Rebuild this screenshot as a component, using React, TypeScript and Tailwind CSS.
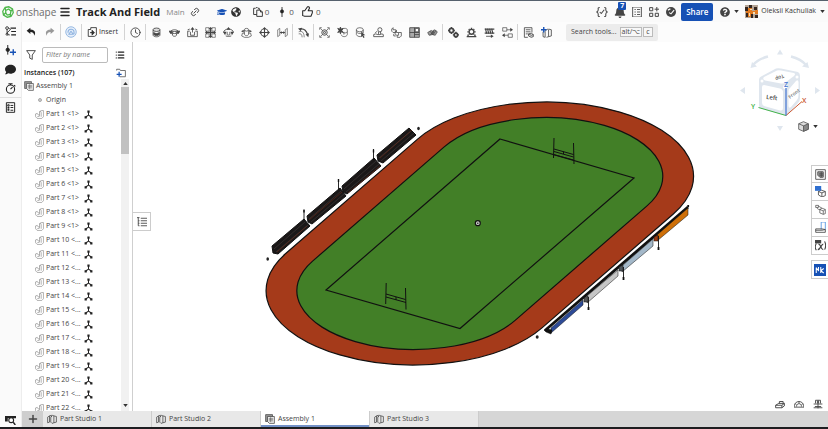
import type { ReactNode } from 'react';
import { Menu, Link2, List, Clock, Plus } from 'lucide-react';
import { FaGraduationCap, FaGlobeAmericas, FaBell, FaComment, FaQuestionCircle } from 'react-icons/fa';
import { clsx } from 'clsx';

type IconProps = { children: ReactNode; className?: string };

function Icon({ children, className = 'size-3' }: IconProps) {
  return (
    <svg
      viewBox="0 0 16 16"
      fill="none"
      stroke="currentColor"
      strokeWidth="1.2"
      strokeLinejoin="round"
      className={clsx('shrink-0', className)}
      aria-hidden="true"
    >
      {children}
    </svg>
  );
}

const partStudioIcon = (
  <>
    <path d="M1 5l3-2v10l-3 1zM4 3l3-1v3M6 5l3-3 2 1v11l-3 1-2-2z" />
    <path d="M11 3l4 1v9l-4 1" />
  </>
);

const assemblyIcon = (
  <>
    <path d="M1 1h11v11H1z" fill="#999" />
    <path d="M4 4h11v11H7l-3-3z" fill="#eee" />
    <path d="M6 7h7M6 9h7M6 11h7M9 5v8" strokeWidth="0.8" />
  </>
);

const partIcon = <path d="M1 7l3-1 2 3 2-1V3l3-2h4v11l-3 3H4l-3-3zM8 8v3l-4 1M11 4v8M8 3h3" strokeWidth="1" />;

const mateIcon = (
  <>
    <path d="M8 3v6L3 12.5M8 9l5 3.5" strokeWidth="1.8" />
    <path d="M6 1h4v4H6zM1 11h4v4H1zM11 11h4v4h-4z" fill="currentColor" stroke="none" />
  </>
);

const undoArrow = <path d="M7 1L1 6l6 5V8c4 0 6 2 6 6 4-6 0-10-6-10z" fill="currentColor" stroke="none" />;

const toolGroups: { label: string; icon: ReactNode }[][] = [
  [
    {
      label: 'Fastened mate',
      icon: (
        <>
          <ellipse cx="8" cy="4" rx="5" ry="2.5" fill="#ddd" />
          <path d="M3 4v8c1 3 9 3 10 0V4" />
          <path d="M4 8c2 2 6 2 8 0v3c-2 2-6 2-8 0z" fill="currentColor" />
        </>
      ),
    },
    {
      label: 'Revolute mate',
      icon: (
        <>
          <path d="M2 7c2-4 10-4 12 0M5 8v4c1 2 5 2 6 0V8" />
          <path d="M0 6h5l-2 4zM16 6h-5l2 4z" fill="currentColor" />
          <ellipse cx="8" cy="8" rx="3" ry="1.5" />
        </>
      ),
    },
    {
      label: 'Slider mate',
      icon: (
        <>
          <path d="M4 6H1v8h14V6h-3M5 7v5h6V7M8 2v6" />
          <path d="M5 4l3-4 3 4z" fill="currentColor" stroke="none" />
          <path d="M1 4l3-1M15 4l-3-1" />
        </>
      ),
    },
    {
      label: 'Planar mate',
      icon: (
        <>
          <path d="M1 1h5v5H1zM10 1h5v5h-5zM1 10h5v5H1zM10 10h5v5h-5z" strokeWidth="0.9" />
          <path d="M8 2v12M2 8h12" strokeWidth="2" />
          <path d="M5 3l3-3 3 3zM5 13l3 3 3-3zM3 5L0 8l3 3zM13 5l3 3-3 3z" fill="currentColor" stroke="none" />
        </>
      ),
    },
    {
      label: 'Cylindrical mate',
      icon: (
        <>
          <path d="M1 8c0-3 3-5 7-5s7 2 7 5M4 13c3 1 5 1 8 0M6 7v4c1 1 3 1 4 0V7" />
          <path d="M0 7h5l-2 5zM16 7h-5l2 5zM5 4l3-4 3 4z" fill="currentColor" stroke="none" />
        </>
      ),
    },
    {
      label: 'Pin slot mate',
      icon: (
        <>
          <path d="M5 9H2l-1 4 4 2h6l4-2-1-4h-3M5 4v7c1 2 5 2 6 0V4" strokeWidth="1" />
          <ellipse cx="8" cy="4" rx="3" ry="2" strokeWidth="1" />
          <path d="M0 6l4-2v4zM16 6l-4-2v4z" fill="currentColor" stroke="none" />
        </>
      ),
    },
    {
      label: 'Ball mate',
      icon: (
        <>
          <circle cx="8" cy="8" r="5.5" />
          <path d="M8 2v12M2 8h12" strokeWidth="1.6" />
          <path d="M5.5 3L8 0l2.5 3zM5.5 13L8 16l2.5-3zM3 5.5L0 8l3 2.5zM13 5.5L16 8l-3 2.5z" fill="currentColor" stroke="none" />
        </>
      ),
    },
    {
      label: 'Parallel mate',
      icon: (
        <>
          <path d="M1 4l3-2v10l-3 2zM12 4l3-2v10l-3 2z" strokeWidth="0.9" />
          <path d="M5 8h6" strokeWidth="1.4" />
          <path d="M4 8l3-2v4zM12 8L9 6v4z" fill="currentColor" stroke="none" />
        </>
      ),
    },
  ],
  [
    {
      label: 'Tangent mate',
      icon: (
        <>
          <path d="M1 7c5-2 8 1 8 8M1 10c3-1 5 1 5 5" strokeWidth="0.9" />
          <path d="M3 3c5-1 9 2 11 8" strokeWidth="1.8" />
          <path d="M0 2l6-1-2 5zM15 15l-4-4 5-2z" fill="currentColor" stroke="none" />
        </>
      ),
    },
  ],
  [
    {
      label: 'Group',
      icon: (
        <>
          <path d="M1 4V1h3M12 1h3v3M15 12v3h-3M4 15H1v-3M2 2l12 12M14 2L2 14" strokeWidth="1" />
          <circle cx="8" cy="8" r="4" fill="#ddd" />
          <circle cx="8" cy="8" r="1.5" />
        </>
      ),
    },
    {
      label: 'Mate connector',
      icon: (
        <>
          <path d="M8 3c2-2 7-1 7 1v7c-1 4-8 4-9 0M9 8c2 1 4 1 6-1M10 7v4" strokeWidth="1" />
          <path d="M5 0l1 3 3-1-2 3 2 3-3-1-1 3-1-3-3 1 2-3-2-3 3 1z" fill="currentColor" />
        </>
      ),
    },
    {
      label: 'Snap mode',
      icon: (
        <>
          <ellipse cx="7" cy="4" rx="5" ry="3" strokeWidth="1" />
          <path d="M2 4v7c1 3 6 4 9 2M12 4v5M3 8c2 2 6 2 8 0" strokeWidth="1" />
          <path d="M9 7l6 5h-3l2 3-2 1-1-3-2 1z" fill="currentColor" stroke="none" />
        </>
      ),
    },
    {
      label: 'Replicate',
      icon: (
        <>
          <path d="M1 11l3-1 3 1h3l3-1 2 1v3H1zM8 10V7M11 10V7" />
          <circle cx="10" cy="4" r="3" />
          <path d="M3 9l3-3" />
        </>
      ),
    },
    {
      label: 'Linear pattern',
      icon: (
        <path d="M1 3l2-2v3h4v4H3L1 6zM6 7l2-2v3h3v4H8l-2-2zM11 8h4v5l-2 2H9v-3M4 10v3h3" strokeWidth="1.1" />
      ),
    },
    {
      label: 'Exploded view',
      icon: (
        <>
          <rect x="1" y="1" width="14" height="14" fill="#aaa" />
          <path d="M1 8h14M8 1v14M8 11h7" />
          <rect x="9" y="2" width="5" height="5" fill="#fff" />
        </>
      ),
    },
    {
      label: 'Named positions',
      icon: (
        <>
          <path d="M1 8l5-3 4 2-2 4-5 1zM7 9l4-5 4 3-3 5-4-1z" fill="#999" strokeWidth="1" />
          <path d="M4 6l6 6M10 4l-5 8M13 5l-4 6" strokeWidth="1" />
        </>
      ),
    },
  ],
  [
    {
      label: 'Gear relation',
      icon: (
        <>
          <circle cx="5" cy="5" r="3" strokeWidth="2.5" />
          <circle cx="11.5" cy="11.5" r="2.500" strokeWidth="2.5" />
          <path d="M5 0v2M5 8v2M0 5h2M8 5h2M11.5 7v2M11.5 14v2M7 11.5h2M14 11.5h2" strokeWidth="2" />
        </>
      ),
    },
    {
      label: 'Rack and pinion relation',
      icon: (
        <>
          <circle cx="8" cy="7" r="3.5" strokeWidth="2" />
          <path d="M8 1v2M2 7h2M12 7h2M4 3l1 1M12 3l-1 1M4 11l1-1M12 11l-1-1" strokeWidth="2" />
          <path d="M1 14h14M2 12h2M12 12h2" strokeWidth="2" />
        </>
      ),
    },
    {
      label: 'Screw relation',
      icon: (
        <>
          <path d="M2 2l2 8M5 2l2 8M8 2l2 8M11 2l2 8M1 3h14M1 9h14" strokeWidth="1.7" />
          <path d="M3 13.5h8" />
          <path d="M10 11l4 2.5-4 2.5z" fill="currentColor" stroke="none" />
        </>
      ),
    },
    {
      label: 'Linear relation',
      icon: (
        <>
          <path d="M1 1h6v5H1zM9 10h6v5H9zM7 4h6M9 12H3" strokeWidth="1" />
          <path d="M12 1l4 3-4 3zM4 9l-4 3 4 3z" fill="currentColor" stroke="none" />
        </>
      ),
    },
  ],
  [
    {
      label: 'Bill of materials',
      icon: (
        <>
          <path d="M7 15H2V1h11v7M4 4h7M4 7h7M4 10h3" />
          <path d="M8 10l4-1 3 2v3l-3 1-4-2zM8 10l4 2 3-1" fill="#ddd" />
        </>
      ),
    },
    {
      label: 'Create part in context',
      icon: (
        <>
          <path d="M3 7v7l3 1V6l3-3 2 1v10l-3 1M11 3l4 1v9l-4 1" />
          <path d="M4 0v8M0 4h8" stroke="#1651b5" strokeWidth="2" />
        </>
      ),
    },
  ],
];

const railTools = [
  {
    label: 'Feature list',
    icon: (
      <>
        <path d="M8 3h8M9 8h7M9 13h7" strokeWidth="1.8" />
        <circle cx="3" cy="3" r="2" />
        <path d="M3 5v5c0 2 1 3 4 3M5 3l3 2-5 5" />
        <circle cx="3" cy="12" r="1.5" />
      </>
    ),
  },
  {
    label: 'Create version',
    icon: (
      <>
        <path d="M4 0v14" strokeWidth="1.4" />
        <circle cx="4" cy="7" r="2.5" fill="currentColor" />
        <path d="M12 6v9M7 10.5h9" stroke="#1651b5" strokeWidth="2" />
      </>
    ),
  },
];

const tabs = [
  { label: 'Part Studio 1', active: false },
  { label: 'Part Studio 2', active: false },
  { label: 'Assembly 1', active: true },
  { label: 'Part Studio 3', active: false },
];

const sidePanels = [
  {
    label: 'Assembly configuration',
    icon: (
      <>
        <rect x="1" y="1" width="14" height="14" />
        <path d="M4 4h8v8H7L4 9z" fill="#999" />
        <path d="M6 7h6M6 9h6M9 4v8" />
      </>
    ),
  },
  {
    label: 'Appearance',
    icon: (
      <>
        <path d="M9 6l6 2v6l-5 2-5-3V8zM5 8l5 2 5-2M10 10v6" />
        <rect x="0" y="0" width="9" height="7" fill="#2f6fd0" stroke="none" />
      </>
    ),
  },
  {
    label: 'Configured features',
    icon: (
      <path d="M1 2h4v3H1zM3 5c0 3 3 3 5 3M7 8l3-2 5 2v6l-3 1-5-2zM7 8l5 2v5M12 10l3-2M5 3l5 3" strokeWidth="1" />
    ),
  },
  {
    label: 'Display states',
    icon: (
      <>
        <path d="M9 11V0h6v11" stroke="#4a90e2" />
        <path d="M1 10h9l5 1v4H1zM1 12h9l5-1" />
      </>
    ),
  },
  {
    label: 'Variables',
    icon: (
      <>
        <path d="M2 5c-2 3-2 7 0 10M14 2c2 4 2 8 0 12" strokeWidth="1.6" />
        <path d="M5 6c4 0 3 8 7 8M12 6c-3 0-4 8-8 8" strokeWidth="1.8" />
        <path d="M0 0h9v5H0z" fill="currentColor" stroke="none" />
      </>
    ),
  },
];

function ShortSeparator() {
  return <div className="mx-px h-4 w-px shrink-0 bg-[#d3d3d3]" />;
}

function Caret() {
  return (
    <svg viewBox="0 0 6 4" className="h-[3px] w-[5px] shrink-0" aria-hidden="true">
      <path d="M0 0h6L3 4z" fill="#333" />
    </svg>
  );
}

function Header() {
  return (
    <header className="flex h-[22px] shrink-0 items-center border-t border-[#56616d] bg-[#fafafa] pr-[3px] pl-[2px]">
      <svg viewBox="0 0 16 16" className="size-3 shrink-0" fill="none" stroke="#4bb648" strokeWidth="1.7" aria-hidden="true">
        <path d="M4 2l5-1 5 3 1 5-3 5-5 1-5-3-1-5zM5 6l4-2 3 3-1 4-4 1-2-3zM4 2l1 4M14 4l-2 3M12 14l-1-3M2 12l3-3" />
      </svg>
      <span className="ml-0.5 w-[39px] text-[10px] leading-4 text-[#6b6b6b]">onshape</span>
      <button aria-label="Main menu" className="ml-1">
        <Menu className="size-3" color="#222" strokeWidth={3} />
      </button>
      <h1 className="ml-[5px] text-[11px] leading-4 font-bold whitespace-nowrap text-[#222]">Track And Field</h1>
      <span className="ml-[6px] text-[8px] text-[#888]">Main</span>
      <button aria-label="Copy link" className="ml-[5px]">
        <Link2 className="size-2.5 -rotate-45 text-[#333]" strokeWidth={2} />
      </button>

      <div className="ml-[17px] flex items-center text-[8px] text-[#555]">
        <FaGraduationCap className="size-2.5 text-[#1651b5]" />
        <FaGlobeAmericas className="ml-1 size-2.5 text-[#333]" />
        <button className="ml-3 flex items-center gap-0.5" aria-label="Copies: 0">
          <Icon className="size-2.5 text-[#333]">
            <path d="M6 12H1V2h3l1-1h2l1 1h2v3M6 5h6l3 3v7H6zM12 5v3h3" strokeWidth="1.5" />
          </Icon>
          0
        </button>
        <button className="ml-2 flex items-center gap-0.5" aria-label="Versions: 0">
          <Icon className="size-2.5 text-[#222]">
            <path d="M8 0v16" strokeWidth="1.4" />
            <circle cx="8" cy="7" r="2.5" fill="currentColor" />
          </Icon>
          0
        </button>
        <button className="ml-2 flex items-center gap-[3px]" aria-label="Likes: 0">
          <Icon className="size-[11px] text-[#222]">
            <path d="M1 7h3l4-6h2l1 2-2 4h6v3l-2 5H4l-3-1z" strokeWidth="1.5" />
          </Icon>
          0
        </button>
      </div>

      <div className="ml-auto flex items-center text-[#444]">
        <button aria-label="Custom features">
          <Icon className="size-3">
            <path d="M5 2C2 2 3 4 3 5s0 2-2 3c2 1 2 2 2 3s-1 3 2 3M11 2c3 0 2 2 2 3s0 2 2 3c-2 1-2 2-2 3s1 3-2 3M5 8l2 2 4-5" strokeWidth="1.4" />
          </Icon>
        </button>
        <button aria-label="7 notifications" className="relative ml-[6px]">
          <FaBell className="size-3" />
          <span className="absolute -top-1 left-1 h-2 w-2 rounded-[1px] bg-[#1651b5] text-[7px] leading-2 font-bold text-white">7</span>
        </button>
        <button aria-label="Tasks" className="ml-[6px]">
          <Icon className="size-2.5">
            <path d="M1 0h14v16H1zM4 4h2M8 4h5M4 8h2M8 8h5M4 12h2M8 12h5" strokeWidth="1.4" />
          </Icon>
        </button>
        <button aria-label="App store" className="ml-[7px]">
          <Icon className="size-2.5">
            <path d="M1 1h5v5H1zM1 10h5v5H1zM10 10h5v5h-5zM12.5 0v7M9 3.5h7" strokeWidth="1.6" />
          </Icon>
        </button>
        <button aria-label="Resource center" className="ml-[7px]">
          <svg viewBox="0 0 16 16" className="size-2.5" aria-hidden="true">
            <circle cx="8" cy="8" r="8" fill="#444" />
            <path d="M5 9l3 2 5-6M3 5l4-2" fill="none" stroke="#fafafa" strokeWidth="1.8" />
          </svg>
        </button>
        <button className="ml-[5px] h-[18px] w-8 rounded-[2px] bg-[#1651b5] text-[8px] font-semibold text-white">Share</button>
        <button aria-label="Help" className="ml-[7px] flex items-center gap-1">
          <FaQuestionCircle className="size-2.5" />
          <Caret />
        </button>
        <button className="ml-[6px] flex items-center">
          <svg viewBox="0 0 13 13" className="size-[13px]" aria-hidden="true">
            <path fill="#b5a596" d="M0 0h13v13H0z" />
            <path fill="#33251f" d="M0 2h3v4H0zM4 0h3v3H4zM9 2h3v3H9zM1 8h2v4H1zM6 9h2v4H6zM10 10h3v3h-3z" />
            <path fill="#e27a20" d="M3 3h4v3h3v3H6v3H3V8H1V6h2zM10 5h3v4h-3z" />
            <path fill="#f6dfb8" d="M5 4h2v1H5zM8 7h2v2H8zM4 8h1v3H4z" />
          </svg>
          <span className="ml-[3px] text-[7px] whitespace-nowrap text-[#333]">Oleksii Kachuliak</span>
          <span className="ml-[4px]"><Caret /></span>
        </button>
      </div>
    </header>
  );
}

function Toolbar() {
  return (
    <div className="flex h-5 shrink-0 items-center bg-[#fcfcfc] text-[#444]">
      <button aria-label="Undo" className="flex w-[18px] justify-center text-[#222]">
        <Icon className="size-2.5">{undoArrow}</Icon>
      </button>
      <button aria-label="Redo" className="flex w-[19px] justify-center text-[#999]">
        <Icon className="size-2.5 -scale-x-100">{undoArrow}</Icon>
      </button>
      <ShortSeparator />
      <button aria-label="Update" className="flex w-[18px] justify-center text-[#8fb3e0]">
        <Icon className="size-3">
          <circle cx="8" cy="8" r="7" fill="#e6effa" />
          <path d="M4 9c0-6 8-6 8-1M12 8v3M5 11l3-4 3 4z" strokeWidth="1.5" />
        </Icon>
      </button>
      <ShortSeparator />
      <button className="ml-1 flex w-9 items-center gap-0.5 text-[7px] text-[#333]">
        <Icon className="size-2.5">
          <path d="M2 4h4V1h9v12l-3 2H2z" strokeWidth="1.4" />
          <path d="M5 9h6" strokeWidth="1.8" />
          <path d="M8 5l4 4-4 4z" fill="currentColor" />
        </Icon>
        Insert
      </button>
      <ShortSeparator />
      <button aria-label="History" className="flex w-[18px] justify-center">
        <Clock className="size-[11px]" strokeWidth={2} />
      </button>
      {toolGroups.map((group) => (
        <div key={group[0].label} className="flex items-center">
          <ShortSeparator />
          {group.map((tool) => (
            <button key={tool.label} aria-label={tool.label} className="flex w-[18px] justify-center">
              <Icon className="size-[11px]">{tool.icon}</Icon>
            </button>
          ))}
        </div>
      ))}
      <button className="ml-[11px] flex h-[17px] items-center rounded-[2px] bg-[#ececec] px-[5px] text-[7px] whitespace-nowrap text-[#444]">
        Search tools...
        <kbd className="ml-[3px] h-2.5 border border-[#bbb] bg-[#f7f7f7] px-px font-[inherit] text-[7px] leading-2">alt/⌥</kbd>
        <kbd className="ml-px h-2.5 border border-[#bbb] bg-[#f7f7f7] px-0.5 font-[inherit] text-[7px] leading-2">c</kbd>
      </button>
    </div>
  );
}

function Rail() {
  return (
    <nav className="flex w-[22px] shrink-0 flex-col items-center border-r border-[#ededed] bg-[#fafafa] text-[#222]">
      {railTools.map((tool) => (
        <button key={tool.label} aria-label={tool.label} className="flex h-[19px] items-center">
          <Icon className="size-[11px]">{tool.icon}</Icon>
        </button>
      ))}
      <button aria-label="Comments" className="flex h-[19px] items-center">
        <FaComment className="size-[11px]" />
      </button>
      <button aria-label="Performance" className="flex h-[19px] w-full items-center justify-center border-b border-[#e0e0e0]">
        <Icon className="size-[11px]">
          <circle cx="8" cy="9" r="6" strokeWidth="1.6" />
          <path d="M5 1h6M8 1v2M8 9l3-3M13 3l2 2" strokeWidth="1.6" />
        </Icon>
      </button>
      <button aria-label="Properties" className="flex h-[19px] items-center">
        <Icon className="size-[11px]">
          <path d="M2 1h12v14H2zM4 4h2v2H4zM4 8h2v1H4zM4 11h2v1H4zM8 5h4M8 8h4M8 12h4" strokeWidth="1.4" />
        </Icon>
      </button>
      <button aria-label="Search tabs" className="mt-auto flex h-4 items-center">
        <Icon className="size-[11px]">
          <path d="M0 3h16v3H4v5H0z" fill="currentColor" stroke="none" />
          <circle cx="9" cy="9" r="3.5" fill="#fff" strokeWidth="1.6" />
          <path d="M12 12l3 4" strokeWidth="2" />
        </Icon>
      </button>
    </nav>
  );
}

function InstancePanel() {
  const parts = Array.from({ length: 22 }, (_, i) => i + 1);

  return (
    <aside className="flex w-[111px] shrink-0 flex-col border-r border-[#cfcfcf] bg-white text-[#444]">
      <div className="flex h-[25px] shrink-0 items-center px-1">
        <Icon className="size-2.5">
          <path d="M1 1h14l-5 7v7l-4-2V8z" strokeWidth="1.5" />
        </Icon>
        <input
          aria-label="Filter by name"
          placeholder="Filter by name"
          className="ml-[6px] h-4 w-[66px] rounded-[2px] border border-[#bbb] px-[3px] text-[7px] italic outline-none placeholder:text-[#777]"
        />
        <button aria-label="List options" className="ml-[7px]">
          <List className="size-2.5 text-[#222]" strokeWidth={3} />
        </button>
      </div>
      <div className="flex h-3 shrink-0 items-center justify-between pr-[6px] pl-[2px]">
        <h2 className="text-[7px] leading-2 font-semibold whitespace-nowrap text-[#222]">Instances (107)</h2>
        <button aria-label="New folder">
          <Icon className="size-2.5 text-[#555]">
            <path d="M1 4V2h5l1 2h8v10H6" strokeWidth="1.3" />
            <path d="M5 6v8M1 10h8" stroke="#1651b5" strokeWidth="2" />
          </Icon>
        </button>
      </div>

      <div className="flex min-h-0 flex-1 overflow-hidden">
        <ul className="min-w-0 flex-1 overflow-hidden text-[7px] leading-[14px]">
          <li className="flex h-[14px] items-center gap-[2px] pl-[2px]">
            <Icon className="size-2.5 text-[#555]">{assemblyIcon}</Icon>
            Assembly 1
          </li>
          <li className="flex h-[14px] items-center pl-4">
            <span className="size-1 rounded-full border border-[#aaa] bg-[#ccc]" />
            <span className="ml-1">Origin</span>
          </li>
          {parts.map((n) => (
            <li key={n} className="flex h-[14px] items-center pl-[13px]">
              <Icon className="size-[9px] text-[#777]">{partIcon}</Icon>
              <span className="ml-[2px] w-[35px] whitespace-pre">{n < 10 ? `Part ${n} <1>` : `Part ${n} <...`}</span>
              <Icon className="ml-[3px] size-[9px] text-[#222]">{mateIcon}</Icon>
            </li>
          ))}
        </ul>
        <div className="mr-[3px] flex w-2 shrink-0 flex-col items-center justify-between bg-[#f1f1f1]">
          <div className="flex h-2 items-center">
            <span className="rotate-180"><Caret /></span>
          </div>
          <div className="h-[67px] w-full bg-[#c1c1c1]" />
          <div className="flex flex-1 items-end pb-1"><Caret /></div>
        </div>
      </div>
    </aside>
  );
}

function TrackModel() {
  return (
    <svg viewBox="133 42 695 369" className="size-full" fill="none" stroke="#111" strokeWidth="1.2" role="img" aria-label="Track and field assembly">
      <path d="M417.6 139.1A147.8 74.3 0 0 1 673.6 213.7L542 327.9A147.8 74.3 0 0 1 286 253.3Z" fill="#a53a1a" />
      <path d="M444.2 146.9A117 58.8 0 0 1 647 205.9L515.4 320.1A117 58.8 0 0 1 312.6 261.1Z" fill="#427f27" />
      <path d="M500 139L634 178 460 328.5 326 290Z" />

      {/* Goal posts */}
      <path d="M554 138L553.5 158M573.5 143L574 164M554 149L573.5 154.5M554 151.5L573.5 157M553.5 154.5L573.5 160M563.5 151.5V154" strokeWidth="1" />
      <path d="M386.2 283L385.7 304M405.5 288L406 309.5M386 294L405.5 299.5M386 297L406 302.5M396 297V300" strokeWidth="1" />

      {/* Origin marker */}
      <circle cx="477.8" cy="223.2" r="2.5" fill="#ccc" strokeWidth="1.2" />
      <circle cx="477.8" cy="223.2" r="0.7" fill="#111" stroke="none" />

      {/* Bleachers */}
      <g fill="#1b1818" strokeWidth="1">
        <path d="M272 246L304 219 310 226 278 254 273 253Z" />
        <path d="M307 216L340 188 346 196 312 224 308 222Z" />
        <path d="M342 186L374 158 381 166 347 194 343 192Z" />
        <path d="M377 155L409 128 416 135 383 163 378 161Z" />
        <path d="M304 210V220M338.5 179V190M373.5 149V160" strokeWidth="0.9" />
        <path d="M304 209.5v3M338.5 179v3M373.5 149.5v3" strokeWidth="1.4" />
      </g>
      <g stroke="#494343" strokeWidth="0.5">
        <path d="M274 249L305 222M276 252L308 225M309 219L341 191M311 222L344 194M344 189L376 161M346 192L379 164M379 158L411 131M381 161L414 133" />
      </g>
      <path d="M277 252L307 226M309 220L342 192M348 193L380 166M380 158L412 130" stroke="#7a2f18" strokeWidth="0.5" />
      <g fill="#222" stroke="none">
        <ellipse cx="418.5" cy="128.5" rx="1.3" ry="1.7" />
        <ellipse cx="267.7" cy="259" rx="1.3" ry="1.7" />
        <ellipse cx="537.2" cy="337" rx="1.5" ry="1.8" />
      </g>

      {/* Covered stands */}
      <path d="M545 330.5L688 207" strokeWidth="2.8" />
      <g strokeWidth="0.5">
        <path d="M551 328L583 300V305L551 333Z" fill="#2d4b98" />
        <path d="M587 296L618 270V276L587 303Z" fill="#c6c6c6" />
        <path d="M622 266L653 239V246L622 272Z" fill="#a3b8c9" />
        <path d="M657 235L688 208V215L657 241Z" fill="#ce6f08" />
        <path d="M584 298l4-2v6l-4 0z" fill="#555" />
        <path d="M619 267l4-2v6l-4 0z" fill="#50565c" />
        <path d="M654 237l4-2v6l-4 0z" fill="#9a3b12" />
        <path d="M544 330l4-1 4 1-1 4-5-2z" fill="#111" />
      </g>
      <path d="M588.5 297V309M623.5 267V279M658.5 236V249" strokeWidth="0.9" />
      <path d="M588.5 307v3M623.5 277v3M658.5 247v3M688.2 205v2" strokeWidth="1.8" />
    </svg>
  );
}

function ViewCube() {
  return (
    <svg viewBox="738 48 84 84" className="size-[84px]" aria-label="View cube" role="img" fontFamily="'Open Sans', sans-serif">
      <g fill="#dfe6ee">
        <path d="M777 54.5L780 49.5 783 54.5zM777 126L780 131 783 126zM745 87V94L740 90.5zM815 87V94L820 90.5zM750.5 68L752 62 757 66.5zM809 68L807.5 62 802 66.5z" />
        <path d="M753 65Q758 59 768 56.5M791 56.5Q801 59 806 65" fill="none" stroke="#dfe6ee" strokeWidth="2.5" />
        <path d="M759 80Q759 77 762 76L776 68.5Q778 68 781 68.5L798 72Q800 73 800 76V98Q800 101 798 103L788 114Q786 116 783 115L762 109Q759 108 759 105Z" />
      </g>
      <g fill="#fff">
        <path d="M764 77L777 70.5Q779 70 781 70.5L794 73Q796 74 794 76L786 82Q784 84 781 83.5L765 80.5Q762 79 764 77Z" />
        <path d="M764 85L780 88.5Q783 89.5 783 92V108Q783 111 780 110.5L764 106Q762 105 762 103V87Q762 85 764 85Z" />
        <path d="M790 88L796 81Q798 79 798.5 82V95Q798.5 98 797 100L791 107Q789 109 788.5 106V91Q788.5 89 790 88Z" />
        <circle cx="762" cy="81" r="1.5" />
        <circle cx="785" cy="87" r="2" />
        <circle cx="797" cy="77" r="1.5" />
      </g>
      <path d="M786 115.5L758.5 107.5" stroke="#42b34a" strokeWidth="1" />
      <path d="M786 115.5L802 101.5" stroke="#c9562f" strokeWidth="1" />
      <path d="M786 115.5V88" stroke="#4273d1" strokeWidth="1.2" />
      <g fontSize="6" fontWeight="600">
        <text x="766" y="99" fill="#444" transform="rotate(6 766 99)">Left</text>
        <text x="790" y="99" fill="#777" fontSize="5" transform="rotate(-38 790 99)">Front</text>
        <text x="783" y="74" fill="#555" fontSize="5" transform="rotate(155 783 74)">Top</text>
        <text x="751" y="109" fill="#42b34a" fontSize="7">Y</text>
        <text x="802" y="102.5" fill="#c9562f" fontSize="7">X</text>
        <text x="784" y="86.500" fill="#4273d1" fontSize="7">Z</text>
      </g>
    </svg>
  );
}

function Viewport() {
  return (
    <main className="relative min-w-0 flex-1 overflow-hidden bg-white">
      <TrackModel />

      <button aria-label="Toggle mates list" className="absolute top-[170px] left-0 flex h-[19px] w-[18px] items-center justify-center border border-l-0 border-[#ccc] bg-white text-[#444]">
        <Icon className="size-2.5">
          <path d="M0 1h4M2 1v13M6 2h10M2 6h2M6 6h10M2 10h2M6 10h10M2 14h2M6 14h10" strokeWidth="1.4" />
        </Icon>
      </button>

      <div className="absolute top-[6px] right-[6px]">
        <ViewCube />
      </div>
      <button aria-label="View options" className="absolute top-[79px] right-[10px] flex items-center gap-1">
        <Icon className="size-[11px] text-[#555]">
          <path d="M1 4l7-3 7 3v8l-7 3-7-3z" fill="#ddd" />
          <path d="M8 7l7-3v8l-7 3z" fill="#888" />
          <path d="M1 4l7 3" />
        </Icon>
        <Caret />
      </button>

      <div className="absolute top-[123px] right-0 flex w-[17px] flex-col text-[#444]">
        {sidePanels.map((panel) => (
          <button key={panel.label} aria-label={panel.label} className="flex h-[18px] items-center justify-center border-b border-l border-[#ccc] bg-white first:border-t">
            <Icon className="size-[11px]">{panel.icon}</Icon>
          </button>
        ))}
        <button aria-label="Simulation" className="mt-[5px] flex h-[19px] items-center justify-center border border-r-0 border-[#ccc] bg-white">
          <Icon className="size-3">
            <rect x="0" y="0" width="16" height="16" fill="#1651b5" stroke="none" />
            <path d="M3 12V5l3 4V4M9 4v8M13 6l-4 3 4 3" stroke="#fff" strokeWidth="1.4" />
          </Icon>
        </button>
      </div>

      <div className="absolute right-[5px] bottom-[2px] flex gap-[9px] text-[#444]">
        <button aria-label="Mass properties">
          <Icon className="size-2.5">
            <path d="M1 10l5-3h9v4l-4 3H1zM1 10h10l4-3M11 10v4M7 7V4h6v3" strokeWidth="1.5" />
          </Icon>
        </button>
        <button aria-label="Measure">
          <Icon className="size-2.5">
            <path d="M0 13c0-12 16-12 16 0zM4 12c0-6 8-6 8 0M8 4v3M2 8l2 1M14 8l-2 1" strokeWidth="1.4" />
          </Icon>
        </button>
        <button aria-label="Interference">
          <Icon className="size-2.5">
            <path d="M4 7V2h3v5M9 7V2h3v5M1 8h14M3 12h10M1 14h14M8 1v14" strokeWidth="1.4" />
          </Icon>
        </button>
      </div>
    </main>
  );
}

function TabBar() {
  return (
    <div className="flex h-4 shrink-0 bg-[#d6d6d6] text-[7px] text-[#444]">
      <button aria-label="Add tab" className="flex w-[21px] shrink-0 items-center justify-center bg-[#cecece]">
        <Plus className="size-3" strokeWidth={3} />
      </button>
      {tabs.map((tab) => (
        <button
          key={tab.label}
          className={clsx(
            'flex w-[109px] items-center gap-[3px] border-r border-[#ccc] pl-1',
            tab.active ? 'bg-white shadow-[inset_0_-2px_0_#7391c7]' : 'bg-[#e8e8e8]'
          )}
        >
          <Icon className="size-2.5">{tab.active ? assemblyIcon : partStudioIcon}</Icon>
          {tab.label}
        </button>
      ))}
    </div>
  );
}

export default function App() {
  return (
    <div className="flex h-screen flex-col overflow-hidden border-b-2 border-[#1d1d20] bg-white font-['Open_Sans',sans-serif]">
      <Header />
      <div className="flex min-h-0 flex-1">
        <Rail />
        <div className="flex min-w-0 flex-1 flex-col">
          <Toolbar />
          <div className="flex min-h-0 flex-1">
            <InstancePanel />
            <Viewport />
          </div>
          <TabBar />
        </div>
      </div>
    </div>
  );
}
